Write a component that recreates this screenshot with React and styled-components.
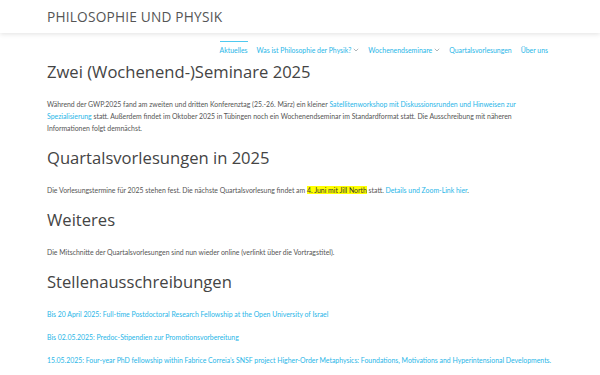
import { createGlobalStyle, styled } from "styled-components";

const GlobalStyle = createGlobalStyle`
  html, body {
    margin: 0;
    padding: 0;
    background: #fff;
  }
  body {
    font-family: "Lato", "Open Sans", sans-serif;
    color: #555;
  }
`;

export default function App() {
  return (
    <>
      <GlobalStyle />
      <Header>
        <Inner>
          <SiteTitle>PHILOSOPHIE UND PHYSIK</SiteTitle>
        </Inner>
      </Header>
      <Inner>
        <Nav>
          <NavItem $active>Aktuelles</NavItem>
          <NavItem>Was ist Philosophie der Physik?<Chevron /></NavItem>
          <NavItem>Wochenendseminare<Chevron /></NavItem>
          <NavItem>Quartalsvorlesungen</NavItem>
          <NavItem>Über uns</NavItem>
        </Nav>
        <Main>
          <Heading>Zwei (Wochenend-)Seminare 2025</Heading>
          <Para>
            Während der GWP.2025 fand am zweiten und dritten Konferenztag (25.-26. März) ein kleiner{" "}
            <Link>Satellitenworkshop mit Diskussionsrunden und Hinweisen zur Spezialisierung</Link>{" "}
            statt. Außerdem findet im Oktober 2025 in Tübingen noch ein Wochenendseminar im Standardformat statt. Die Ausschreibung mit näheren Informationen folgt demnächst.
          </Para>
          <Heading>Quartalsvorlesungen in 2025</Heading>
          <Para>
            Die Vorlesungstermine für 2025 stehen fest. Die nächste Quartalsvorlesung findet am{" "}
            <Mark>4. Juni mit Jill North</Mark> statt. <Link>Details und Zoom-Link hier</Link>.
          </Para>
          <Heading>Weiteres</Heading>
          <Para>
            Die Mitschnitte der Quartalsvorlesungen sind nun wieder online (verlinkt über die Vortragstitel).
          </Para>
          <Heading>Stellenausschreibungen</Heading>
          <Para><Link>Bis 20 April 2025: Full-time Postdoctoral Research Fellowship at the Open University of Israel</Link></Para>
          <Para><Link>Bis 02.05.2025: Predoc-Stipendien zur Promotionsvorbereitung</Link></Para>
          <Para><Link>15.05.2025: Four-year PhD fellowship within Fabrice Correia’s SNSF project Higher-Order Metaphysics: Foundations, Motivations and Hyperintensional Developments.</Link></Para>
        </Main>
      </Inner>
    </>
  );
}

function Chevron() {
  return (
    <svg width="6" height="4" viewBox="0 0 6 4" style={{ marginLeft: 2 }}>
      <path d="M0.8 0.8 L3 3 L5.2 0.8" fill="none" stroke="#9aa3a8" strokeWidth="0.8" />
    </svg>
  );
}

const Header = styled.header`
  background: #fff;
  box-shadow: 0 1px 5px rgba(0, 0, 0, 0.12);
  height: 33px;
  display: flex;
  align-items: center;
`;

const Inner = styled.div`
  margin: 0 47px;
`;

const SiteTitle = styled.div`
  font-family: "Open Sans", sans-serif;
  font-size: 13.7px;
  color: #555;
  letter-spacing: 0.2px;
`;

const Nav = styled.nav`
  display: flex;
  justify-content: flex-end;
  gap: 9px;
  margin-top: 8px;
  padding-right: 5px;
`;

const NavItem = styled.div`
  display: flex;
  align-items: center;
  font-size: 6.9px;
  color: #29b6e8;
  padding-top: 4px;
  border-top: 1px solid ${props => (props.$active ? "#4fc9f0" : "transparent")};
`;

const Main = styled.main`
  padding-top: 5px;
`;

const Heading = styled.h2`
  font-family: "Open Sans", sans-serif;
  font-weight: 400;
  font-size: 16.6px;
  color: #444;
  margin: 0 0 13px;
  line-height: 26px;
`;

const Para = styled.p`
  font-size: 6.9px;
  line-height: 12px;
  margin: 0 0 11px;
  color: #555;
`;

const Link = styled.span`
  color: #29b6e8;
`;

const Mark = styled.span`
  background: #ffff00;
  color: #333;
`;
